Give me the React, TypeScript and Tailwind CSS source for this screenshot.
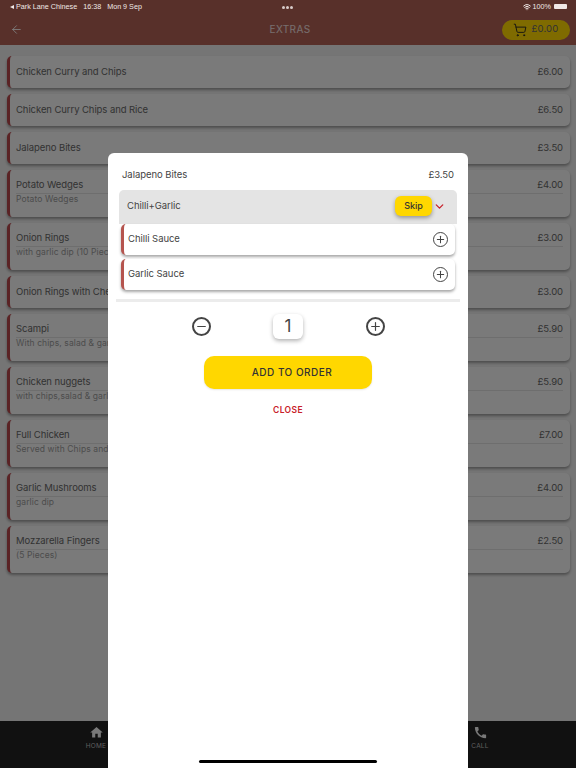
import React from "react";
import { ArrowLeft, ShoppingCart, Plus, Minus, ChevronDown, Wifi } from "lucide-react";
import { MdHome, MdCall } from "react-icons/md";

const font = { fontFamily: "Inter, 'Open Sans', sans-serif" };

type Row = { name: string; price: string; sub?: string };
const rows: Row[] = [
  { name: "Chicken Curry and Chips", price: "£6.00" },
  { name: "Chicken Curry Chips and Rice", price: "£6.50" },
  { name: "Jalapeno Bites", price: "£3.50" },
  { name: "Potato Wedges", price: "£4.00", sub: "Potato Wedges" },
  { name: "Onion Rings", price: "£3.00", sub: "with garlic dip (10 Pieces)" },
  { name: "Onion Rings with Cheese", price: "£3.00" },
  { name: "Scampi", price: "£5.90", sub: "With chips, salad & garlic dip" },
  { name: "Chicken nuggets", price: "£5.90", sub: "with chips,salad & garlic dip" },
  { name: "Full Chicken", price: "£7.00", sub: "Served with Chips and Salad" },
  { name: "Garlic Mushrooms", price: "£4.00", sub: "garlic dip" },
  { name: "Mozzarella Fingers", price: "£2.50", sub: "(5 Pieces)" },
];

function MenuRow({ r }: { r: Row }) {
  return (
    <div className="mb-[6px] rounded-[5px] border-l-[3px] border-[#b5474a] bg-[#f4f4f4] pl-[6px] pr-[7px] shadow-[0_2px_3px_rgba(0,0,0,0.35)]">
      {r.sub ? (
        <>
          <div className="flex h-[23.5px] items-center justify-between border-b border-[#dcdcdc] pt-[8px] text-[9.5px] tracking-[-0.08px] text-[#666]">
            <span>{r.name}</span>
            <span>{r.price}</span>
          </div>
          <div className="h-[23.5px] text-[8.5px] leading-[11px] tracking-[0.1px] text-[#999]">{r.sub}</div>
        </>
      ) : (
        <div className="flex h-[32px] items-center justify-between pt-[1px] text-[9.5px] tracking-[-0.08px] text-[#666]">
          <span>{r.name}</span>
          <span>{r.price}</span>
        </div>
      )}
    </div>
  );
}

function ExtraRow({ name }: { name: string }) {
  return (
    <div className="flex h-[31px] items-center justify-between rounded-[5px] border-l-[3px] border-[#b5544e] bg-white pl-[4px] pr-[7px] text-[9.5px] tracking-[-0.05px] text-[#444] shadow-[0_2px_3px_rgba(0,0,0,0.35)]">
      <span>{name}</span>
      <span className="flex h-[15px] w-[15px] items-center justify-center rounded-full border-[1.6px] border-[#444]">
        <Plus size={11} strokeWidth={2.2} color="#444" />
      </span>
    </div>
  );
}

export default function App() {
  return (
    <div style={font} className="relative flex h-[768px] w-[576px] flex-col overflow-hidden bg-[#ebebeb]">
      <header className="h-[45px] shrink-0 bg-[#b06055] pt-[14px]">
        <div className="grid h-[31px] grid-cols-3 items-center pl-[10px] pr-[6px]">
          <ArrowLeft size={13} color="#ffffff" strokeWidth={1.6} />
          <span className="text-center text-[10px] tracking-[0.4px] text-white/80">EXTRAS</span>
          <div className="flex justify-end">
            <div className="flex h-[20px] w-[68px] items-center justify-center gap-[4px] rounded-full bg-[#ffd700] text-[9.5px] tracking-[0.2px] text-[#666]">
              <ShoppingCart size={14} strokeWidth={1.6} color="#222" />
              <span>£0.00</span>
            </div>
          </div>
        </div>
      </header>

      <main className="flex-1 pl-[7px] pr-[6px] pt-[11px]">
        {rows.map((r) => (
          <MenuRow key={r.name} r={r} />
        ))}
      </main>

      <nav className="grid h-[47px] shrink-0 grid-cols-3 bg-[#222222] text-[6.5px] tracking-[0.2px] text-[#bbbbbb]">
        <div className="flex flex-col items-center pt-[4px]">
          <MdHome size={15} color="#f2f2f2" />
          <span className="mt-[2px]">HOME</span>
        </div>
        <div />
        <div className="flex flex-col items-center pt-[4px]">
          <MdCall size={15} color="#f2f2f2" />
          <span className="mt-[2px]">CALL</span>
        </div>
      </nav>

      {/* dim overlay */}
      <div className="absolute inset-0 bg-black/50" />

      {/* status bar */}
      <div className="absolute inset-x-0 top-0 flex h-[14px] items-center justify-between pl-[10px] pr-[9px] text-[7.2px] text-[#f0e8e6]" style={{ fontFamily: "'Liberation Sans', sans-serif" }}>
        <div className="flex items-center gap-[6px]">
          <span className="flex items-center gap-[1px]">
            <span className="mr-[1px] h-0 w-0 border-y-[2.5px] border-r-[4px] border-y-transparent border-r-[#f0e8e6]" />
            Park Lane Chinese
          </span>
          <span>16:38</span>
          <span>Mon 9 Sep</span>
        </div>
        <div className="flex items-center gap-[2px]">
          <Wifi size={8} strokeWidth={3} color="#f0e8e6" />
          <span>100%</span>
          <span className="ml-[1px] h-[5px] w-[13px] rounded-[1px] bg-[#f0e8e6]" />
        </div>
      </div>
      <div className="absolute left-[282px] top-[6px] flex gap-[1.5px]">
        <span className="h-[2.5px] w-[2.5px] rounded-full bg-[#d8ccca]" />
        <span className="h-[2.5px] w-[2.5px] rounded-full bg-[#d8ccca]" />
        <span className="h-[2.5px] w-[2.5px] rounded-full bg-[#d8ccca]" />
      </div>

      {/* modal */}
      <div className="absolute bottom-0 left-[108px] top-[153px] w-[360px] rounded-t-[6px] bg-white">
        <div className="flex h-[37px] items-end justify-between pb-[8px] pl-[14px] pr-[14px] text-[9.5px] tracking-[-0.05px] text-[#444]">
          <span>Jalapeno Bites</span>
          <span>£3.50</span>
        </div>
        <div className="mx-[11px] flex h-[34px] items-center justify-between rounded-t-[5px] bg-[#e4e4e4] pb-[2px] pl-[8px] pr-[11px] text-[9.5px] tracking-[-0.05px] text-[#444]">
          <span>Chilli+Garlic</span>
          <div className="flex items-center gap-[1px]">
            <span className="flex h-[20px] w-[37px] items-center justify-center rounded-[6px] bg-[#ffd700] text-[9px] font-medium text-[#333] shadow-[0_2px_4px_rgba(0,0,0,0.35)]">Skip</span>
            <ChevronDown size={13} color="#c8202a" strokeWidth={2.4} />
          </div>
        </div>
        <div className="ml-[13px] mr-[13px] flex flex-col gap-[4px]">
          <ExtraRow name="Chilli Sauce" />
          <ExtraRow name="Garlic Sauce" />
        </div>
        <div className="mx-[8px] mt-[9px] h-[3px] bg-[#ececec]" />
        <div className="mt-[12px] flex items-center justify-center gap-[62.5px]">
          <span className="flex h-[19px] w-[19px] items-center justify-center rounded-full border-2 border-[#444]">
            <Minus size={13} strokeWidth={2.2} color="#444" />
          </span>
          <span className="flex h-[25px] w-[30px] items-center justify-center rounded-[6px] bg-white text-[17px] text-[#444] shadow-[0_2px_4px_rgba(0,0,0,0.3)]">1</span>
          <span className="flex h-[19px] w-[19px] items-center justify-center rounded-full border-2 border-[#444]">
            <Plus size={13} strokeWidth={2.2} color="#444" />
          </span>
        </div>
        <div className="mt-[17px] flex justify-center">
          <div className="flex h-[33px] w-[168px] items-center justify-center rounded-[10px] bg-[#ffd700] pl-[8px] text-[10px] font-medium tracking-[0.5px] text-[#333] shadow-[0_1px_2px_rgba(0,0,0,0.1)]">ADD TO ORDER</div>
        </div>
        <div className="mt-[15px] text-center text-[8.5px] font-semibold tracking-[0.4px] text-[#c8202a]">CLOSE</div>
      </div>

      {/* home indicator */}
      <div className="absolute bottom-[5px] left-[199px] h-[3px] w-[178px] rounded-full bg-black" />
    </div>
  );
}
